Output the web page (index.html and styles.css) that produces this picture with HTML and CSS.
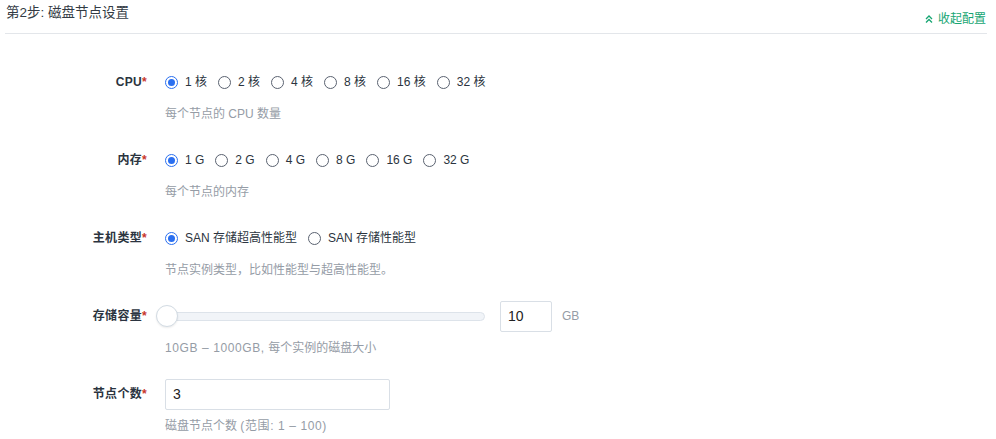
FILE: index.html
```html
<!DOCTYPE html>
<html lang="zh">
<head>
<meta charset="utf-8">
<title>磁盘节点设置</title>
<link rel="stylesheet" href="styles.css">
</head>
<body>
<div class="page">
  <div class="header">
    <div class="title">第2步: 磁盘节点设置</div>
    <a class="collapse" href="#">
      <svg class="chev" width="8" height="8" viewBox="0 0 8 8"><path d="M1 4 L4 1 L7 4 M1 7.5 L4 4.5 L7 7.5" fill="none" stroke="currentColor" stroke-width="1.3"/></svg>
      收起配置
    </a>
  </div>
  <div class="form">
    <div class="row">
      <div class="label">CPU<span class="req">*</span></div>
      <div class="field">
        <div class="control">
          <label class="radio checked"><span class="dot"></span>1 核</label>
          <label class="radio"><span class="dot"></span>2 核</label>
          <label class="radio"><span class="dot"></span>4 核</label>
          <label class="radio"><span class="dot"></span>8 核</label>
          <label class="radio"><span class="dot"></span>16 核</label>
          <label class="radio"><span class="dot"></span>32 核</label>
        </div>
        <div class="help">每个节点的 CPU 数量</div>
      </div>
    </div>
    <div class="row">
      <div class="label">内存<span class="req">*</span></div>
      <div class="field">
        <div class="control">
          <label class="radio checked"><span class="dot"></span>1 G</label>
          <label class="radio"><span class="dot"></span>2 G</label>
          <label class="radio"><span class="dot"></span>4 G</label>
          <label class="radio"><span class="dot"></span>8 G</label>
          <label class="radio"><span class="dot"></span>16 G</label>
          <label class="radio"><span class="dot"></span>32 G</label>
        </div>
        <div class="help">每个节点的内存</div>
      </div>
    </div>
    <div class="row">
      <div class="label">主机类型<span class="req">*</span></div>
      <div class="field">
        <div class="control">
          <label class="radio checked"><span class="dot"></span>SAN 存储超高性能型</label>
          <label class="radio"><span class="dot"></span>SAN 存储性能型</label>
        </div>
        <div class="help">节点实例类型，比如性能型与超高性能型。</div>
      </div>
    </div>
    <div class="row">
      <div class="label">存储容量<span class="req">*</span></div>
      <div class="field">
        <div class="control">
          <div class="slider"><div class="track"></div><div class="handle"></div></div>
          <div class="input small">10</div>
          <span class="unit">GB</span>
        </div>
        <div class="help"><span class="latin">10GB – 1000GB,</span> 每个实例的磁盘大小</div>
      </div>
    </div>
    <div class="row">
      <div class="label">节点个数<span class="req">*</span></div>
      <div class="field">
        <div class="control">
          <div class="input wide">3</div>
        </div>
        <div class="help">磁盘节点个数 <span class="latin">(范围: 1 – 100)</span></div>
      </div>
    </div>
  </div>
</div>
</body>
</html>
```
FILE: styles.css
```css
* { box-sizing: border-box; }
body {
  margin: 0;
  background: #fff;
  font-family: "Liberation Sans", "Noto Sans CJK SC", sans-serif;
  font-size: 12px;
  color: #2b3440;
}
.page { padding: 0 9px 0 5px; }
.header {
  display: flex;
  justify-content: space-between;
  height: 34px;
  border-bottom: 1px solid #e3e6ea;
}
.title {
  font-size: 13.5px;
  line-height: 18px;
  padding: 4px 0 0 1px;
  color: #333b44;
}
.collapse {
  align-self: flex-end;
  display: flex;
  align-items: center;
  gap: 5px;
  color: #17a673;
  text-decoration: none;
  font-size: 12px;
  line-height: 16px;
  padding: 0 1px 6px 0;
}
.chev { display: block; }
.form { padding-top: 32px; }
.row {
  display: grid;
  grid-template-columns: 142px 1fr;
  column-gap: 18px;
  margin-bottom: 21px;
}
.label {
  height: 32px;
  line-height: 32px;
  text-align: right;
  font-weight: bold;
  color: #2b3440;
  letter-spacing: 0.3px;
}
.req { color: #c8352b; font-weight: bold; }
.control {
  height: 32px;
  display: flex;
  align-items: center;
}
.radio {
  display: flex;
  align-items: center;
  margin-right: 11px;
  color: #2b3440;
  line-height: 16px;
}
.dot {
  width: 13px;
  height: 13px;
  border: 1px solid #5a6270;
  border-radius: 50%;
  margin-right: 7px;
  position: relative;
  flex: none;
}
.radio.checked .dot { border-color: #2a6ff0; }
.radio.checked .dot::after {
  content: "";
  position: absolute;
  left: 2px; top: 2px;
  width: 7px; height: 7px;
  border-radius: 50%;
  background: #2a6ff0;
}
.help {
  margin-top: 7px;
  line-height: 18px;
  color: #959ca6;
}
.latin { letter-spacing: 0.6px; }
.slider {
  position: relative;
  width: 320px;
  height: 22px;
}
.track {
  position: absolute;
  left: 0; right: 0; top: 7px;
  height: 9px;
  border-radius: 5px;
  background: #f1f4f8;
  border: 1px solid #dde3ea;
}
.handle {
  position: absolute;
  left: -9px; top: 0;
  width: 22px; height: 22px;
  border-radius: 50%;
  background: #fff;
  border: 1px solid #d2dbe3;
  box-shadow: 0 1px 2px rgba(0,0,0,0.08);
}
.input {
  height: 31px;
  border: 1px solid #d9dfe6;
  border-radius: 2px;
  font-size: 14px;
  line-height: 29px;
  padding-left: 7px;
  color: #222;
}
.small { width: 52px; margin-left: 15px; }
.wide { width: 225px; }
.unit { margin-left: 10px; color: #959ca6; }
```
